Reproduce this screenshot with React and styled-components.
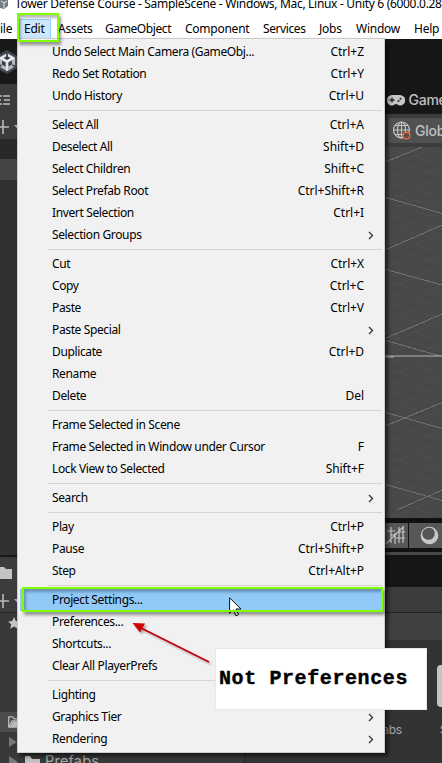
import React from "react";
import styled, { createGlobalStyle, css } from "styled-components";

const Global = createGlobalStyle`
  body { margin: 0; overflow: hidden; background: #333; }
  * { box-sizing: border-box; }
`;
const uiFont = css`font-family: "Noto Sans", "Open Sans", sans-serif; font-size: 12px; letter-spacing: ${(p) => p.$ls ?? -0.25}px;`;

const Window = styled.div`
  position: relative; width: 442px; height: 763px; overflow: hidden;
  display: flex; flex-direction: column; background: #333; color: #000; ${uiFont}
`;
const TitleBar = styled.div`
  height: 16px; flex: none; background: #fff; display: flex; align-items: flex-start; overflow: hidden;
`;
const AppIcon = styled.svg`width: 9px; height: 10px; margin-right: 6px; flex: none;`;
const TitleText = styled.span`
  white-space: pre; line-height: 18px; margin-top: -5px; ${uiFont}
`;
const MenuBar = styled.nav`
  height: 23px; flex: none; background: #fff; display: flex; padding: 3px 0 1px;
`;
const MenuTitle = styled.span`
  width: ${(p) => p.$w}px; flex: none; line-height: 19px; padding-left: ${(p) => p.$pad ?? 7}px;
  white-space: nowrap; ${uiFont}
  ${(p) => p.$open && css`background: #cce8ff; border: 1px solid #99d1ff; border-bottom: 0; line-height: 18px; padding-left: 4px;`}
`;
const Editor = styled.div`flex: 1; display: flex; justify-content: space-between;`;
const LeftDock = styled.div`width: 20px; display: flex; flex-direction: column;`;
const RightDock = styled.div`width: 58px; display: flex; flex-direction: column;`;
const Band = styled.div`
  height: ${(p) => p.$h}px; flex: none; background: ${(p) => p.$bg}; display: flex; align-items: center; overflow: hidden;
  padding: ${(p) => p.$p || 0};
`;
const DarkLabel = styled.span`
  font: 500 14px/20px Inter, sans-serif; color: #c0c0c0; white-space: nowrap;
`;
const GlobalButton = styled.div`
  height: 25px; width: 60px; flex: none; margin-left: 4px; padding-left: 4px; border-radius: 3px 0 0 3px;
  background: #515151; display: flex; align-items: center; gap: 4px;
`;
const ToolButton = styled.div`
  height: 25px; width: ${(p) => p.$w}px; flex: none; margin-right: 1px; background: #575757;
  display: flex; align-items: center; justify-content: center;
`;
const Icon = styled.svg`display: block; flex: none; width: ${(p) => p.$w}px; height: ${(p) => p.$h}px;`;
const AssetArea = styled.div`
  height: 123px; background: #333; position: relative; overflow: hidden;
`;
const Thumb = styled.div`
  position: absolute; left: 53px; top: 25px; width: 30px; height: 42px; border-radius: 4px; background: #c4c4c4;
`;
const AssetLabel = styled.span`
  position: absolute; left: ${(p) => p.$x}px; top: 82px; font: 12px/16px Inter, sans-serif; color: #a8a8a8;
`;
const FolderStrip = styled.div`
  position: absolute; left: 0; top: 753px; width: 245px; height: 10px; overflow: hidden;
  background: #383838; border-right: 1px solid #222; display: flex; align-items: flex-start; padding-left: 8px;
`;
const FolderName = styled.span`
  font: 14.5px/20px Inter, sans-serif; letter-spacing: 0.2px; color: #aaa; margin: -2px 0 0 5px;
`;

const Menu = styled.ul`
  position: absolute; left: 17px; top: 38px; width: 368px; height: 715px; margin: 0; padding: 2px; list-style: none;
  background: #f1f1f1; border: 1px solid #ccc; box-shadow: 3px 3px 4px rgba(0, 0, 0, 0.6);
`;
const Row = styled.li`
  height: 22px; padding: 0 18px 0 32px; display: flex; align-items: center; justify-content: space-between;
  line-height: 22px; white-space: nowrap; background: ${(p) => (p.$active ? "#91c9f7" : "transparent")};
`;
const RowText = styled.span`${uiFont}`;
const Separator = styled.li`
  height: 7px; padding: 3px 0 3px 28px;
  &::after { content: ""; display: block; height: 1px; background: #d4d4d4; }
`;
const Chevron = styled.svg`width: 6px; height: 9px; margin-right: -10px;`;

const Highlight = styled.div`
  position: absolute; left: ${(p) => p.$x}px; top: ${(p) => p.$y}px; width: ${(p) => p.$w}px; height: ${(p) => p.$h}px;
  border: 2px solid #80ff00;
  box-shadow: 2px 3px 3px rgba(0, 0, 0, 0.4), inset 2px 3px 3px rgba(0, 0, 0, 0.28);
`;
const Arrow = styled.svg`
  position: absolute; left: 125px; top: 615px; width: 95px; height: 55px;
  filter: drop-shadow(2px 2px 1px rgba(0, 0, 0, 0.3));
`;
const Cursor = styled.svg`position: absolute; left: 229px; top: 597px; width: 13px; height: 20px;`;
const Note = styled.div`
  position: absolute; left: 215px; top: 648px; width: 212px; height: 62px; padding-left: 3px;
  background: #fff; border: 1px solid #e8e8e8; white-space: pre;
  font: bold 20px/60px "Liberation Mono", monospace; letter-spacing: 0.6px; color: #000;
  -webkit-text-stroke: 0.4px #000;
`;

const groups = [
  [["Undo Select Main Camera (GameObj...", "Ctrl+Z"], ["Redo Set Rotation", "Ctrl+Y"], ["Undo History", "Ctrl+U"]],
  [["Select All", "Ctrl+A"], ["Deselect All", "Shift+D"], ["Select Children", "Shift+C"], ["Select Prefab Root", "Ctrl+Shift+R"], ["Invert Selection", "Ctrl+I"], ["Selection Groups", ">"]],
  [["Cut", "Ctrl+X"], ["Copy", "Ctrl+C"], ["Paste", "Ctrl+V"], ["Paste Special", ">"], ["Duplicate", "Ctrl+D"], ["Rename"], ["Delete", "Del"]],
  [["Frame Selected in Scene"], ["Frame Selected in Window under Cursor", "F"], ["Lock View to Selected", "Shift+F"]],
  [["Search", ">"]],
  [["Play", "Ctrl+P"], ["Pause", "Ctrl+Shift+P"], ["Step", "Ctrl+Alt+P"]],
  [["Project Settings..."], ["Preferences..."], ["Shortcuts..."], ["Clear All PlayerPrefs"]],
  [["Lighting"], ["Graphics Tier", ">"], ["Rendering", ">"]],
];

const UnityLogo = () => (
  <Icon $w={17} $h={26} viewBox="0 0 17 26">
    <path d="M7 1 17 7v12L7 25-4 19V7z" fill="#44484d" />
    <path d="M7 4 15 8.700v8.800L7 22.200-1 17.500V8.700z" fill="#b4bac1" />
    <path d="M7 4.500 14.500 8.800 7 13-.5 8.800z" fill="#e3e7eb" />
    <path d="M7 8v-5M1.500 16-2 18.200M12.500 16l3.500 2.200" stroke="#44484d" strokeWidth="1.800" />
    <path d="M7 7 10.500 9 7 11 3.500 9zM2 11.500l3.500 2v4L2 15.500zM12 11.500l-3.500 2v4l3.500-2z" fill="#3b3f44" />
    <path d="M7 12.500v9M7 12.500 0 8.800M7 12.500l7-3.700" stroke="#eef1f4" strokeWidth="1.600" />
  </Icon>
);
const AddIcon = () => (
  <Icon $w={20} $h={16} viewBox="0 0 20 16">
    <path d="M0 8h9M3 1v14" stroke="#b8b8b8" strokeWidth="1.600" />
    <path d="M14 6h7l-3.500 4z" fill="#aaa" />
  </Icon>
);
const SceneGrid = () => {
  const faint = [];
  for (let i = -3; i < 38; i++) {
    faint.push(<path key={"a" + i} d={`M0 ${i * 11}l58 -24`} />, <path key={"b" + i} d={`M0 ${i * 11 - 10}l58 16`} />);
  }
  return (
    <Icon $w={58} $h={371} viewBox="0 0 58 371">
      <g stroke="#4e4e4e" fill="none">{faint}</g>
      <path fill="none" stroke="#707070" shapeRendering="crispEdges" d="M0 15.500 38 0M0 50l58 16.500M0 103.500 58 78M0 122l58 16M0 192l58-25M0 193l56 16M0 265l58 16.500M0 279.500 58 255.500M0 337l58 16.500M13 363l45-20" />
      <path d="M0 209h58M0 210h10" stroke="#b4b8b4" />
    </Icon>
  );
};

function MenuRow({ label, hint, active }) {
  return (
    <Row $active={active}>
      <RowText $ls={-0.37}>{label}</RowText>
      {hint === ">" ? (
        <Chevron viewBox="0 0 6 9"><path d="M1 1l3.500 3.500L1 8" fill="none" stroke="#333" strokeWidth="1.300" /></Chevron>
      ) : hint ? <RowText $ls={-0.04}>{hint}</RowText> : null}
    </Row>
  );
}

export default function App() {
  return (
    <Window>
      <Global />
      <TitleBar>
        <AppIcon viewBox="0 0 9 10">
          <path d="M0-2h5l3 2v6L4 9 0 8z" fill="#747b82" /><path d="M1 1l3 2 3-2M4 3v5" stroke="#e0e4e8" fill="none" />
        </AppIcon>
        <TitleText $ls={-0.31}>Tower Defense Course - SampleScene - Windows, Mac, Linux - Unity 6 (6000.0.28f</TitleText>
      </TitleBar>
      <MenuBar>
        <MenuTitle $w={19} $pad={0}>ile</MenuTitle>
        <MenuTitle $w={32} $open>Edit</MenuTitle>
        <MenuTitle $w={47}>Assets</MenuTitle>
        <MenuTitle $w={80} $ls={-0.4}>GameObject</MenuTitle>
        <MenuTitle $w={78}>Component</MenuTitle>
        <MenuTitle $w={56} $ls={-0.4}>Services</MenuTitle>
        <MenuTitle $w={37}>Jobs</MenuTitle>
        <MenuTitle $w={58}>Window</MenuTitle>
        <MenuTitle $w={40}>Help</MenuTitle>
      </MenuBar>
      <Editor>
        <LeftDock>
          <Band $h={45} $bg="#191919"><UnityLogo /></Band>
          <Band $h={31} $bg="#3c3c3c">
            <Icon $w={12} $h={12} viewBox="0 0 12 12"><path d="M0 2h2M3 2h7M0 6h1M4 6h6M0 10h2M3 10h7" stroke="#bbb" strokeWidth="1.300" /></Icon>
          </Band>
          <Band $h={24} $bg="#3c3c3c"><AddIcon /></Band>
          <Band $h={20} $bg="#292929" />
          <Band $h={21} $bg="#444" />
          <Band $h={375} $bg="#313131" />
          <Band $h={2} $bg="#191919" />
          <Band $h={32} $bg="#3c3c3c">
            <Icon $w={12} $h={12} viewBox="0 0 12 12"><path d="M0 0h4l2 2h6v10H0z" fill="#c4c4c4" /></Icon>
          </Band>
          <Band $h={23} $bg="#3c3c3c"><AddIcon /></Band>
          <Band $h={1} $bg="#242424" />
          <Band $h={20} $bg="#383838" $p="0 0 0 8px">
            <Icon $w={12} $h={12} viewBox="0 0 12 12"><path d="m6 0 1.800 4 4.200.5-3.200 2.800.9 4.400L6 9.500l-3.700 2.200.9-4.400L0 4.500 4.200 4z" fill="#c4c4c4" /></Icon>
          </Band>
          <Band $h={79} $bg="#383838" />
          <Band $h={20} $bg="#4c4c4c" $p="0 0 0 8px">
            <Icon $w={12} $h={12} viewBox="0 0 12 12"><path d="M.7 11V.8h4l1.500 2H12M1 11l3-6h8v6z" fill="none" stroke="#bbb" strokeWidth="1.300" /><path d="m2 11 2.500-5H12v5z" fill="#bbb" /></Icon>
          </Band>
          <Band $h={31} $bg="#383838" $p="0 0 12px 9px">
            <Icon $w={8} $h={10} viewBox="0 0 8 10"><path d="M0 0 8 5 0 10z" fill="#777" /></Icon>
          </Band>
        </LeftDock>
        <RightDock>
          <Band $h={75} $bg="#171717" $p="47px 0 0 3px">
            <Icon $w={18} $h={11} viewBox="0 0 18 11">
              <path fillRule="evenodd" fill="#c6c6c6" d="M5 0h8a5 5 0 0 1 0 10.500c-2 0-2.500-1.500-4-1.500s-2 1.500-4 1.500A5 5 0 0 1 5 0z" />
              <path d="M2.500 5h5M5 2.500v5" stroke="#222" strokeWidth="1.300" /><circle cx="13.500" cy="3.700" r="1" fill="#222" /><circle cx="11.500" cy="6" r="1" fill="#222" />
            </Icon>
            <DarkLabel>&nbsp;Game</DarkLabel>
          </Band>
          <Band $h={33} $bg="#3c3c3c">
            <GlobalButton>
              <Icon $w={19} $h={19} viewBox="0 0 19 19">
                <g fill="none" stroke="#c4c4c4" strokeWidth="1.200"><circle cx="9.500" cy="9" r="8" /><ellipse cx="9.500" cy="9" rx="4" ry="8" /><path d="M9.500 1v16M1.500 9h16M3 4.500h13M3 13.500h13" /></g>
                <circle cx="14.500" cy="14.500" r="3.300" fill="#515151" stroke="#ef6337" strokeWidth="1.500" />
              </Icon>
              <DarkLabel>Global</DarkLabel>
            </GlobalButton>
          </Band>
          <Band $h={371} $bg="#484848"><SceneGrid /></Band>
          <Band $h={34} $bg="#111">
            <ToolButton $w={24}>
              <Icon $w={20} $h={18} viewBox="0 0 20 18"><path d="M5 1v16M9 7v11M13 1v16M17 1v16M1 5h8M4 9h5M10 12h9M13 6h6M0 18 18 0" stroke="#c4c4c4" strokeWidth="1.200" /></Icon>
            </ToolButton>
            <ToolButton $w={40}>
              <Icon $w={19} $h={19} viewBox="0 0 19 19"><circle cx="9.500" cy="9.500" r="8.500" fill="#c8c8c8" /><circle cx="8.500" cy="7.500" r="6.300" fill="#555" /><circle cx="9.500" cy="9.500" r="8.300" fill="none" stroke="#c8c8c8" /></Icon>
            </ToolButton>
          </Band>
          <Band $h={3} $bg="#484848" />
          <Band $h={32} $bg="#161616" />
          <Band $h={25} $bg="#3c3c3c" />
          <Band $h={1} $bg="#242424" />
          <Band $h={27} $bg="#414141" />
          <AssetArea><Thumb /><AssetLabel $x={-24}>Prefabs</AssetLabel><AssetLabel $x={56}>S</AssetLabel></AssetArea>
        </RightDock>
      </Editor>
      <FolderStrip>
        <Icon $w={10} $h={10} viewBox="0 0 10 10"><path d="M1 3 10 9 1 15z" fill="#777" /></Icon>
        <Icon $w={22} $h={10} viewBox="0 0 22 10"><path d="M7 3h5l2 3h8v6H7z" fill="#c2c2c2" /></Icon>
        <FolderName>Prefabs</FolderName>
      </FolderStrip>
      <Menu>
        {groups.map((g, i) => (
          <React.Fragment key={i}>
            {i > 0 && <Separator />}
            {g.map(([label, hint]) => <MenuRow key={label} label={label} hint={hint} active={label === "Project Settings..."} />)}
          </React.Fragment>
        ))}
      </Menu>
      <Cursor viewBox="0 0 13 20"><path d="M.6.800v15.500l3.700-3.500 2.500 6 2.700-1.200L7 12h5z" fill="#fff" stroke="#111" /></Cursor>
      <Highlight $x={17} $y={13} $w={42} $h={29} />
      <Highlight $x={22} $y={587} $w={361} $h={25} />
      <Arrow viewBox="0 0 95 55">
        <path d="M14 12 84 47" stroke="#c80000" strokeWidth="1.800" /><path d="M7.500 8 20 8.500 17.500 13 15 17.500z" fill="#d00000" />
      </Arrow>
      <Note>Not Preferences</Note>
    </Window>
  );
}
